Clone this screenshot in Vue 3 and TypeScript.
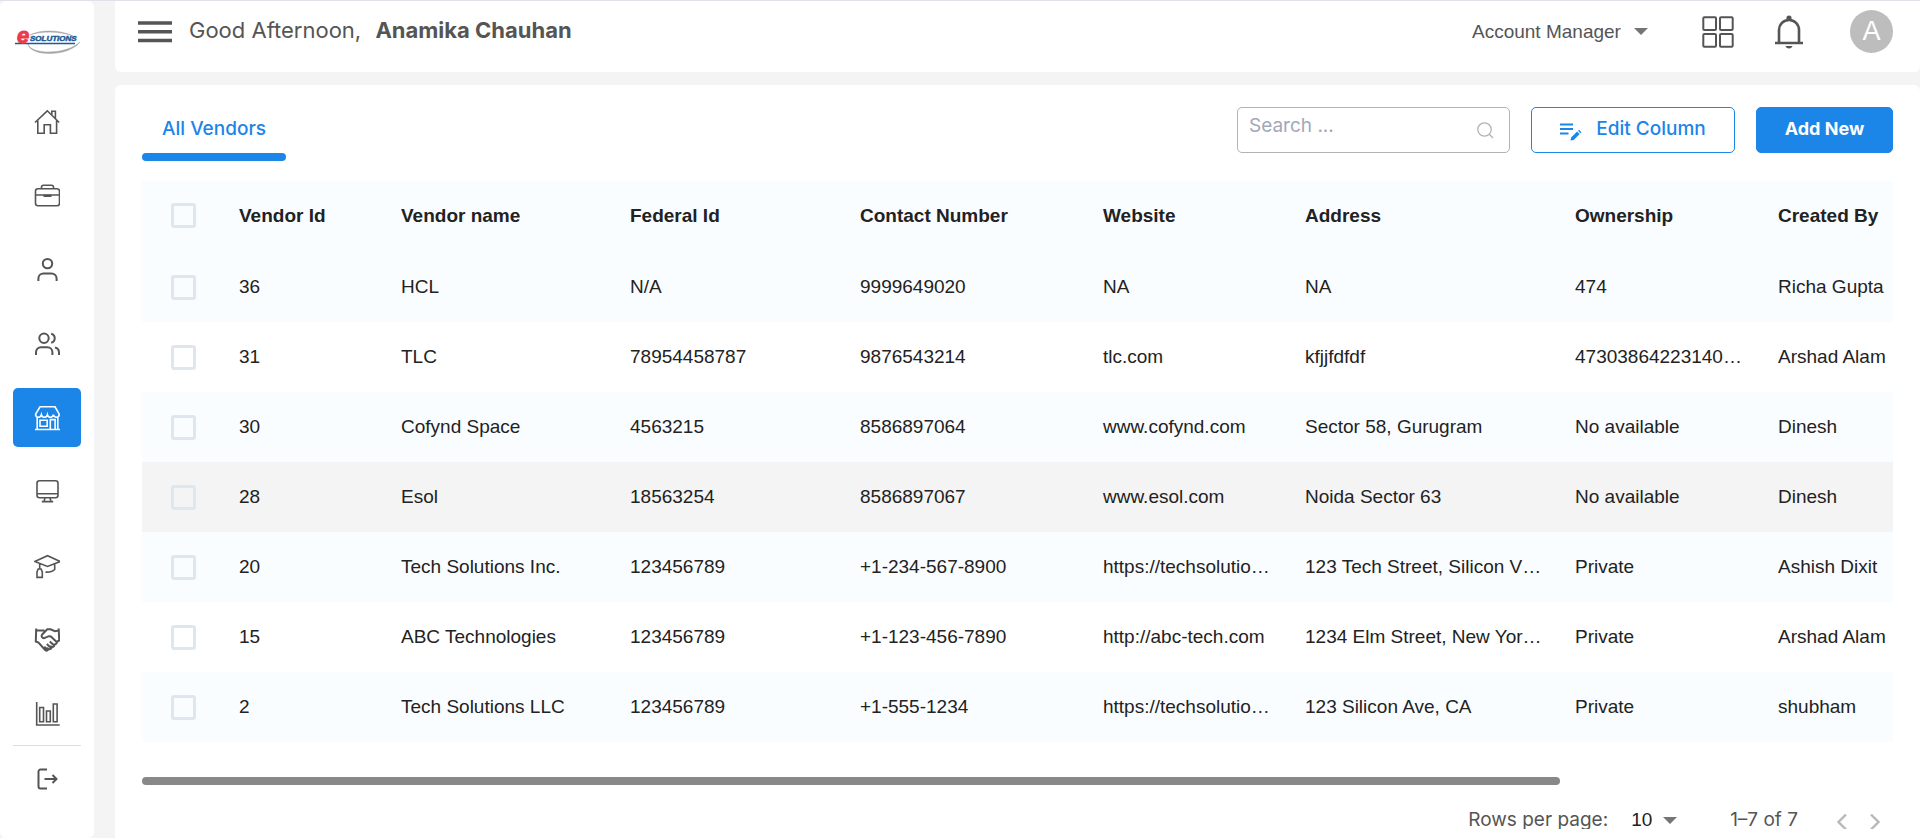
<script setup lang="ts">
import { ref } from 'vue'

interface Vendor {
  id: number
  name: string
  federalId: string
  contact: string
  website: string
  address: string
  ownership: string
  createdBy: string
}

const columns: string[] = [
  'Vendor Id',
  'Vendor name',
  'Federal Id',
  'Contact Number',
  'Website',
  'Address',
  'Ownership',
  'Created By',
]

const vendors: Vendor[] = [
  { id: 36, name: 'HCL', federalId: 'N/A', contact: '9999649020', website: 'NA', address: 'NA', ownership: '474', createdBy: 'Richa Gupta' },
  { id: 31, name: 'TLC', federalId: '78954458787', contact: '9876543214', website: 'tlc.com', address: 'kfjjfdfdf', ownership: '47303864223140…', createdBy: 'Arshad Alam' },
  { id: 30, name: 'Cofynd Space', federalId: '4563215', contact: '8586897064', website: 'www.cofynd.com', address: 'Sector 58, Gurugram', ownership: 'No available', createdBy: 'Dinesh' },
  { id: 28, name: 'Esol', federalId: '18563254', contact: '8586897067', website: 'www.esol.com', address: 'Noida Sector 63', ownership: 'No available', createdBy: 'Dinesh' },
  { id: 20, name: 'Tech Solutions Inc.', federalId: '123456789', contact: '+1-234-567-8900', website: 'https://techsolutio…', address: '123 Tech Street, Silicon V…', ownership: 'Private', createdBy: 'Ashish Dixit' },
  { id: 15, name: 'ABC Technologies', federalId: '123456789', contact: '+1-123-456-7890', website: 'http://abc-tech.com', address: '1234 Elm Street, New Yor…', ownership: 'Private', createdBy: 'Arshad Alam' },
  { id: 2, name: 'Tech Solutions LLC', federalId: '123456789', contact: '+1-555-1234', website: 'https://techsolutio…', address: '123 Silicon Ave, CA', ownership: 'Private', createdBy: 'shubham' },
]

const highlighted = ref<number>(28)
const selected = ref<number[]>([])
const search = ref<string>('')
</script>

<template>
  <div class="page">
    <aside class="sidebar">
      <a class="logo" href="#" aria-label="eSolutions">
        <svg viewBox="0 0 68 26" width="68" height="26">
          <path d="M17 6C26 1 46 0 60 7 46 2 28 2 17 6ZM15 15c3 11 38 11 52-2C56 28 17 28 15 15Z" fill="#a3a5a8" stroke="#a3a5a8" stroke-width=".5" />
          <path d="M2 14.500h60" stroke="#1b5a96" stroke-width="1.600" />
          <text x="4" y="14" class="logo-e">e</text>
          <text x="17" y="12" class="logo-rest">SOLUTIONS</text>
        </svg>
      </a>
      <nav class="nav">
        <a class="nav-item" href="#" aria-label="Home">
          <svg viewBox="0 0 26 26"><path d="M1 13.500 13.300 1.800 25.200 13.500M3.800 11.500V24.300h6.400v-8.600h6.200v8.600h6.200V11.500M17.800 6V2.300h3.600v7.200" /></svg>
        </a>
        <a class="nav-item" href="#" aria-label="Jobs">
          <svg viewBox="0 0 26 26"><rect x="1.500" y="5.800" width="24" height="17" rx="2.500" /><path d="M7.500 5.600V4.300a2 2 0 0 1 2-2h8a2 2 0 0 1 2 2v1.300M1.500 12h24" /><path d="M9.500 12.800h8" stroke-width="2.400" /></svg>
        </a>
        <a class="nav-item" href="#" aria-label="Profile">
          <svg viewBox="0 0 26 26" class="bold"><circle cx="13.500" cy="6.600" r="4.700" /><path d="M4.400 24v-2.600a5 5 0 0 1 5-5h8.200a5 5 0 0 1 5 5V24" /></svg>
        </a>
        <a class="nav-item" href="#" aria-label="Team">
          <svg viewBox="0 0 26 26" class="bold"><circle cx="10" cy="7.200" r="4.700" /><path d="M2 24v-2.800a5 5 0 0 1 5-5h6.400a5 5 0 0 1 5 5V24M17.200 2.700a4.700 4.700 0 0 1 0 9.100M21 16.600a5 5 0 0 1 4 4.800V24" /></svg>
        </a>
        <a class="nav-item active" href="#" aria-label="Vendors" aria-current="page">
          <svg viewBox="0 0 26 26"><path d="M6 1.800h15l4.200 7.400c0 2-1.200 3-2.800 3-1.700 0-2.700-1-3-2.500-.4 1.500-1.400 2.500-3 2.500s-2.600-1-3-2.500c-.4 1.500-1.400 2.500-3 2.500s-2.600-1-3-2.500c-.4 1.500-1.400 2.500-3 2.500-1.600 0-2.800-1-2.800-3ZM3.200 12.300v12.200M23.800 12.300v12.200M1 24.500h25M6 15.200h7.200v6H6ZM16.300 24v-9.400h4.800V24" /></svg>
        </a>
        <a class="nav-item" href="#" aria-label="Systems">
          <svg viewBox="0 0 26 26"><rect x="3" y="1.700" width="21" height="17" rx="2.500" /><path d="M3 14.800h21M11 19l-1 3.500M16 19l1 3.500M7.800 22.600h11.400" /></svg>
        </a>
        <a class="nav-item" href="#" aria-label="Training">
          <svg viewBox="0 0 26 26"><path d="M.8 8.500 13.500 2.700l12.700 5.800-12.700 5ZM5.700 10.800v5M4.200 16h2.900l1.200 3v5.400H3V19ZM20.700 11.500v5c-2 2-5.500 2.800-9.200 2.600" /></svg>
        </a>
        <a class="nav-item" href="#" aria-label="Partners">
          <svg viewBox="0 0 26 26" class="bold"><path d="M2.200 1.500 1.800 14.500l2.700 1.200 6.800 7.500c1.500 1 3 .2 3-1.500 1.700 1.200 3.500 0 3.200-1.900 1.700.6 3.200-.7 2.800-2.400 1.700.2 2.800-1.200 2.400-2.600l2.500-1.300L24.700 1.500M2.200 3.500h8.300M24.700 3.500l-3.700.7-4.500-1.900h-3.200L8.200 7.500c-1.600 2.200.8 4.600 3.200 3.200l3.500-1.500 2 .3 5.500 5.200M15.800 14.500l3.800 3.500M12.800 17l3.800 3.500M10.300 19.700l2.900 2.500" /></svg>
        </a>
        <a class="nav-item" href="#" aria-label="Reports">
          <svg viewBox="0 0 26 26"><path d="M2.700 1v23h23M5.700 6.500h3.800v14.200H5.700ZM12.500 10h3.800v10.700h-3.800ZM19.300 3h3.800v17.700h-3.800Z" /></svg>
        </a>
      </nav>
      <a class="nav-item logout" href="#" aria-label="Log out">
        <svg viewBox="0 0 26 26" class="bold"><path d="M13 3.500H6.500a2 2 0 0 0-2 2v15a2 2 0 0 0 2 2H13M10.500 13h12M18.500 9l4 4-4 4" /></svg>
      </a>
    </aside>

    <div class="main">
      <header class="topbar">
        <button class="plain menu" type="button" aria-label="Toggle menu">
          <svg viewBox="0 0 34 22" width="34" height="22"><path d="M0 2h34M0 10.700h34M0 19.500h34" stroke="#555" stroke-width="3.400" /></svg>
        </button>
        <p class="greeting">Good Afternoon, <strong>Anamika Chauhan</strong></p>
        <label class="picker role">
          <select aria-label="Role">
            <option>Account Manager</option>
          </select>
          <svg class="caret" viewBox="0 0 14 7" width="14" height="7"><path d="M0 0h14L7 7Z" /></svg>
        </label>
        <button class="plain apps" type="button" aria-label="Applications">
          <svg viewBox="0 0 32 32" width="32" height="32"><g fill="none" stroke="#555" stroke-width="2"><rect x="1.300" y="1.300" width="12.700" height="12.700" rx="1" /><rect x="18" y="1.300" width="12.700" height="12.700" rx="1" /><rect x="1.300" y="18" width="12.700" height="12.700" rx="1" /><rect x="18" y="18" width="12.700" height="12.700" rx="1" /></g></svg>
        </button>
        <button class="plain bell" type="button" aria-label="Notifications">
          <svg viewBox="0 0 30 34" width="30" height="34"><path d="M1 28h28M5 27.500V15a10 10 0 0 1 20 0v12.500" fill="none" stroke="#555" stroke-width="2.600" /><circle cx="15" cy="3" r="2.600" fill="#555" /><path d="M11.500 31h7c-.5 3.300-6.500 3.300-7 0Z" fill="#555" /></svg>
        </button>
        <button class="avatar" type="button" aria-label="Account">A</button>
      </header>

      <main class="panel">
        <div class="toolbar">
          <button class="tab" type="button">All Vendors</button>
          <div class="actions">
            <label class="search">
              <input v-model="search" type="text" placeholder="Search ..." aria-label="Search vendors" />
              <svg viewBox="0 0 17 17" width="17" height="17"><g fill="none" stroke="#b3b3b3" stroke-width="1.300"><circle cx="7.500" cy="7.500" r="6.700" /><path d="m12.300 12.300 3.700 3.700" /></g></svg>
            </label>
            <button class="btn outline" type="button">
              <svg viewBox="0 0 22 18" width="22" height="18"><path d="M0 1.500h13M0 6h13M0 10.500h8.500" stroke="currentColor" stroke-width="2" /><path d="m10.500 17.500.6-3 6-6 2.600 2.600-6 6ZM18 7.700l1-1 2.500 2.500-1 1Z" fill="currentColor" /></svg>
              <span>Edit Column</span>
            </button>
            <button class="btn filled" type="button">Add New</button>
          </div>
        </div>

        <div class="table-scroll">
          <table>
            <colgroup>
              <col class="c-check" />
              <col class="c-id" />
              <col class="c-name" />
              <col class="c-federal" />
              <col class="c-contact" />
              <col class="c-website" />
              <col class="c-address" />
              <col class="c-owner" />
              <col class="c-created" />
            </colgroup>
            <thead>
              <tr>
                <th class="check"><input type="checkbox" aria-label="Select all vendors" /></th>
                <th v-for="column in columns" :key="column" scope="col">{{ column }}</th>
              </tr>
            </thead>
            <tbody>
              <tr v-for="v in vendors" :key="v.id" :class="{ hovered: v.id === highlighted }">
                <td class="check"><input v-model="selected" type="checkbox" :value="v.id" :aria-label="`Select vendor ${v.id}`" /></td>
                <td>{{ v.id }}</td>
                <td>{{ v.name }}</td>
                <td>{{ v.federalId }}</td>
                <td>{{ v.contact }}</td>
                <td>{{ v.website }}</td>
                <td>{{ v.address }}</td>
                <td>{{ v.ownership }}</td>
                <td>{{ v.createdBy }}</td>
              </tr>
            </tbody>
          </table>
        </div>
        <div class="track"><div class="thumb"></div></div>

        <footer class="pagination">
          <label for="rows">Rows per page:</label>
          <div class="picker rows">
            <select id="rows">
              <option>10</option>
            </select>
            <svg class="caret" viewBox="0 0 14 7" width="14" height="7"><path d="M0 0h14L7 7Z" /></svg>
          </div>
          <span class="range">1–7 of 7</span>
          <button class="plain step" type="button" aria-label="Previous page">
            <svg viewBox="0 0 12 18" width="12" height="18"><path d="M10 1.500 2.500 9l7.500 7.500" fill="none" stroke="#b8b8b8" stroke-width="2.400" /></svg>
          </button>
          <button class="plain step" type="button" aria-label="Next page">
            <svg viewBox="0 0 12 18" width="12" height="18"><path d="M2 1.500 9.500 9 2 16.500" fill="none" stroke="#b8b8b8" stroke-width="2.400" /></svg>
          </button>
        </footer>
      </main>
    </div>
  </div>
</template>

<style>
body {
  margin: 0;
  background: #f4f4f4;
}
</style>

<style scoped>
* {
  box-sizing: border-box;
}

.page {
  display: flex;
  gap: 21px;
  height: 100vh;
  overflow: hidden;
  border-top: 1px solid #dfe2ee;
  background: #f4f4f4;
  color: #555;
  font-family: Inter, 'Liberation Sans', sans-serif;
  font-size: 19px;
}

.sidebar {
  flex: none;
  display: flex;
  flex-direction: column;
  width: 94px;
  padding: 0 13px;
  border-radius: 6px;
  background: #fff;
}

.logo {
  display: flex;
  height: 91px;
  padding-top: 28px;
}

.logo svg {
  flex: none;
  overflow: visible;
}

.logo-e {
  fill: #ee3a48;
  stroke: #ee3a48;
  stroke-width: 1px;
  font: italic 700 22px 'Liberation Sans', sans-serif;
}

.logo-rest {
  fill: #1b5a96;
  font: italic 700 8px 'Liberation Sans', sans-serif;
  stroke: #1b5a96;
  stroke-width: 0.5px;
}

.nav {
  display: flex;
  flex-direction: column;
  gap: 15px;
  padding-bottom: 2px;
  border-bottom: 1px solid #ddd;
}

.nav-item {
  flex: none;
  display: flex;
  align-items: center;
  justify-content: center;
  height: 59px;
  border-radius: 5px;
  color: #555;
}

.nav-item svg {
  width: 26px;
  height: 26px;
  fill: none;
  stroke: currentColor;
  stroke-width: 1.6px;
}

.nav-item svg.bold {
  stroke-width: 2px;
}

.nav-item.active {
  background: #1c85e8;
  color: #fff;
}

.logout {
  margin-top: 3px;
}

.main {
  flex: 1;
  min-width: 0;
  display: flex;
  flex-direction: column;
  gap: 13px;
}

.plain {
  display: flex;
  padding: 0;
  border: 0;
  background: none;
}

.topbar {
  flex: none;
  display: flex;
  align-items: center;
  height: 71px;
  padding: 0 27px 10px 23px;
  border-radius: 0 0 6px 6px;
  background: #fff;
}

.greeting {
  margin: 0 auto 4px 17px;
  font-size: 22px;
  line-height: 28px;
}

.greeting strong {
  margin-left: 8px;
}

.picker {
  display: flex;
  align-items: center;
  gap: 13px;
}

select {
  appearance: none;
  padding: 0;
  border: 0;
  background: none;
  color: #555;
  font: 19px/24px 'Liberation Sans', sans-serif;
}

.caret {
  fill: #757575;
}

.apps {
  margin-left: 54px;
}

.bell {
  margin-left: 40px;
}

.avatar {
  width: 43px;
  height: 43px;
  margin-left: 46px;
  padding: 0;
  border: 0;
  border-radius: 50%;
  background: #bdbdbd;
  color: #fff;
  font: 27px/43px 'Liberation Sans', sans-serif;
}

.panel {
  flex: 1;
  min-height: 0;
  display: flex;
  flex-direction: column;
  padding: 22px 27px 9px;
  border-radius: 6px 6px 0 0;
  background: #fff;
}

.toolbar {
  flex: none;
  display: flex;
  align-items: flex-start;
  justify-content: space-between;
}

.tab {
  position: relative;
  width: 144px;
  height: 54px;
  padding: 0 0 10px;
  border: 0;
  background: none;
  color: #1c85e8;
  font: 500 19px/24px Inter, sans-serif;
}

.tab::after {
  content: '';
  position: absolute;
  right: 0;
  bottom: 0;
  left: 0;
  height: 8px;
  border-radius: 4px;
  background: #1c85e8;
}

.actions {
  display: flex;
  gap: 21px;
}

.search {
  display: flex;
  align-items: center;
  width: 273px;
  height: 46px;
  padding: 0 15px 0 11px;
  border: 1px solid #b3b3b3;
  border-radius: 5px;
}

.search input {
  flex: 1;
  min-width: 0;
  height: 44px;
  padding: 0 0 10px;
  border: 0;
  outline: 0;
  background: none;
  color: #555;
  font: 19px/24px Inter, sans-serif;
}

.search input::placeholder {
  color: #a2a8b8;
}

.btn {
  display: flex;
  align-items: center;
  justify-content: center;
  gap: 14px;
  height: 46px;
  padding: 0 0 3px;
  border: 1px solid #1c85e8;
  border-radius: 5px;
  font: 500 19px/24px Inter, sans-serif;
}

.outline {
  width: 204px;
  background: #fff;
  color: #1c85e8;
}

.outline svg {
  margin-top: 6px;
}

.filled {
  width: 137px;
  background: #1c85e8;
  color: #fff;
  font-size: 18px;
  font-weight: 700;
}

.table-scroll {
  flex: none;
  margin-top: 20px;
  overflow-x: auto;
  scrollbar-width: none;
}

table {
  width: 2164px;
  table-layout: fixed;
  border-collapse: collapse;
  color: #222;
  font-family: 'Liberation Sans', sans-serif;
  font-size: 19px;
}

.c-check { width: 84px; }
.c-id { width: 162px; }
.c-name { width: 229px; }
.c-federal { width: 230px; }
.c-contact { width: 243px; }
.c-website { width: 202px; }
.c-address { width: 270px; }
.c-owner { width: 203px; }

th,
td {
  height: 70px;
  padding: 0 13px;
  overflow: hidden;
  text-align: left;
  text-overflow: ellipsis;
  white-space: nowrap;
}

th {
  height: 71px;
  padding-bottom: 2px;
}

thead tr,
tbody tr:nth-child(odd) {
  background: #fafdff;
}

tbody tr.hovered {
  background: #f4f4f4;
}

.check {
  padding-left: 29px;
}

.check input {
  display: block;
  appearance: none;
  width: 25px;
  height: 25px;
  margin: 0;
  border: 3px solid #dee7f0;
  border-radius: 3px;
}

.check input:checked {
  background: #1c85e8;
}

.track {
  flex: none;
  margin-top: 35px;
}

.thumb {
  width: 81%;
  height: 8px;
  border-radius: 4px;
  background: #888;
}

.pagination {
  flex: 1;
  min-height: 0;
  display: flex;
  align-items: flex-start;
  justify-content: flex-end;
  margin-top: 23px;
  padding-right: 12px;
  overflow: hidden;
  line-height: 24px;
}

.rows {
  gap: 10px;
  margin-left: 23px;
}

.rows select {
  color: #222;
}

.range {
  margin: 0 38px 0 53px;
}

.step {
  margin-top: 5px;
}

.step + .step {
  margin-left: 21px;
}
</style>
